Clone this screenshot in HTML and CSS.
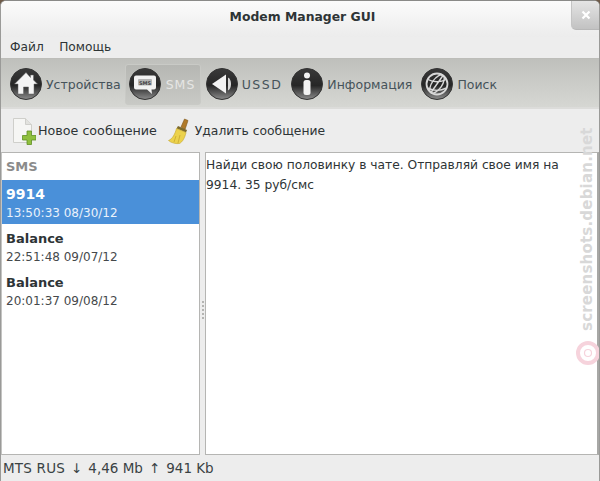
FILE: index.html
```html
<!DOCTYPE html>
<html lang="ru">
<head>
<meta charset="utf-8">
<title>Modem Manager GUI</title>
<link rel="stylesheet" href="styles.css">
</head>
<body>
<div class="window">
  <header class="titlebar">
    <span class="title">Modem Manager GUI</span>
    <button class="close"><svg width="10" height="10" viewBox="0 0 10 10"><path d="M1.5 1.5l7 7M8.5 1.500l-7 7" stroke="#fff" stroke-width="2.200"/></svg></button>
  </header>
  <nav class="menubar"><span>Файл</span><span>Помощь</span></nav>
  <div class="modes">
    <div class="mode">
      <svg class="orb" viewBox="0 0 32 32"><use href="#orbbg"/><path d="M16 4.500L4.500 16H8v10h5.500v-7h5v7H24V16h3.500L23.500 12V7h-3v2.500z" fill="#f4f4f4" stroke="#666" stroke-width=".5"/></svg>
      <span>Устройства</span>
    </div>
    <div class="mode active">
      <svg class="orb" viewBox="0 0 32 32"><use href="#orbbg"/><path d="M7 7.500h18a2 2 0 0 1 2 2v10a2 2 0 0 1-2 2h-2.500l.5 4.500-5-4.500H7a2 2 0 0 1-2-2v-10a2 2 0 0 1 2-2z" fill="#f2f2f2"/><rect x="9" y="11" width="14" height="6.500" rx="1" fill="#b4b4b4"/><text x="16" y="16.500" class="orbtext">SMS</text></svg>
      <span class="wide-sms">SMS</span>
    </div>
    <div class="mode">
      <svg class="orb" viewBox="0 0 32 32"><use href="#orbbg"/><path d="M6 16L20 6.500v19z" fill="#f2f2f2"/><path d="M22 9.500c2 1 3 3.500 3 6.500s-1 5.500-3 6.500z" fill="#d8d8d8"/></svg>
      <span class="wide-ussd">USSD</span>
    </div>
    <div class="mode">
      <svg class="orb" viewBox="0 0 32 32"><use href="#orbbg"/><circle cx="16" cy="7.500" r="3" fill="#f2f2f2"/><rect x="12.500" y="12" width="7" height="15" rx="2.500" fill="#f2f2f2"/></svg>
      <span>Информация</span>
    </div>
    <div class="mode">
      <svg class="orb" viewBox="0 0 32 32"><use href="#orbbg"/><g fill="none" stroke="#d8d8d8" stroke-width="1.400"><circle cx="16" cy="16" r="10.500" stroke-width="1.800"/><ellipse cx="16" cy="16" rx="5" ry="10.500" transform="rotate(35 16 16)"/><path d="M7 11.500c5 3 13 3 18 0M6.500 20c6 3 13 3 19 0M10 24.500L22 7.500"/></g></svg>
      <span>Поиск</span>
    </div>
  </div>
  <div class="actions">
    <div class="action">
      <svg class="act-icon" viewBox="0 0 24 28"><path d="M1.500 1.500h12l6 6v18h-18z" fill="#f6f6f4" stroke="#cfcfcb"/><path d="M13.500 1.500v6h6" fill="#e2e2de" stroke="#cfcfcb"/><path d="M15 14h4.500v4.500H24V23h-4.500v4.500H15V23h-4.500v-4.500H15z" fill="#8fbf3d" stroke="#5f8f24" stroke-width=".8"/></svg>
      <span>Новое сообщение</span>
    </div>
    <div class="action">
      <svg class="act-icon" viewBox="0 0 24 28"><path d="M14 10l3.500-8 3.500 1.500-3 9z" fill="#b07a2a" stroke="#7d5518" stroke-width=".6"/><path d="M11 9l9 4-1 2.500-9.500-4z" fill="#7c6a2e"/><path d="M9.500 11.500l9.500 4c-1 5-3.500 9.500-6.500 11-3 .5-8.500-.5-11-3 4-1.500 6.500-6.500 8-12z" fill="#ecd24c" stroke="#c4a62c" stroke-width=".6"/><path d="M9 19l-2 6M13 18l-2 8" stroke="#c8a830" stroke-width=".8" fill="none"/></svg>
      <span>Удалить сообщение</span>
    </div>
  </div>
  <main class="panes">
    <section class="list">
      <div class="list-head">SMS</div>
      <div class="item selected"><div class="who first">9914</div><div class="when">13:50:33 08/30/12</div></div>
      <div class="item"><div class="who">Balance</div><div class="when">22:51:48 09/07/12</div></div>
      <div class="item"><div class="who">Balance</div><div class="when">20:01:37 09/08/12</div></div>
    </section>
    <div class="grip"><i></i><i></i><i></i><i></i><i></i></div>
    <section class="message">Найди свою половинку в чате. Отправляй свое имя на 9914. 35 руб/смс</section>
  </main>
  <footer class="status"><span class="carrier">MTS RUS</span><span>↓</span><span>4,46 Mb</span><span>↑</span><span>941 Kb</span></footer>
  <div class="mark">screenshots.debian.net</div>
  <svg class="swirl" width="24" height="24" viewBox="0 0 24 24"><circle cx="12" cy="12" r="10" fill="none" stroke="#f6d3dc" stroke-width="4"/><circle cx="12" cy="12" r="3.500" fill="none" stroke="#f6d3dc" stroke-width="1.200"/></svg>
  <svg class="defs" width="0" height="0"><defs>
    <linearGradient id="og" x1="0" y1="0" x2="0" y2="1"><stop offset="0" stop-color="#3a3a3a"/><stop offset=".55" stop-color="#262626"/><stop offset="1" stop-color="#8c8c8c"/></linearGradient>
    <g id="orbbg"><circle cx="16" cy="16" r="15.500" fill="url(#og)" stroke="#333"/></g>
  </defs></svg>
</div>
</body>
</html>
```
FILE: styles.css
```css
* { box-sizing: border-box; }
html, body { margin: 0; padding: 0; background: #6e5a48; }
body { width: 600px; height: 481px; overflow: hidden; }
.window {
  position: relative;
  width: 600px;
  height: 481px;
  display: flex;
  flex-direction: column;
  background: #ededed;
  border-radius: 6px 6px 0 0;
  border-top: 1px solid #8a8a88;
  border-left: 1px solid #9a9a98;
  border-right: 1px solid #9a9a98;
  overflow: hidden;
  font-family: "DejaVu Sans", sans-serif;
  font-size: 12.5px;
  color: #2e3436;
}
.titlebar {
  height: 36px;
  flex: none;
  display: flex;
  align-items: center;
  justify-content: center;
  background: linear-gradient(#fbfbfb, #ececec);
}
.title { font-weight: bold; font-size: 12.4px; color: #2e3436; margin: -6px 0 0 5px; }
.close {
  position: absolute;
  top: 0; right: 0;
  width: 28px; height: 29px;
  padding: 0;
  border: 0;
  border-left: 1px solid #c4c4c4;
  border-bottom: 1px solid #b8b8b8;
  border-radius: 0 0 0 5px;
  background: linear-gradient(#e4e4e4, #c2c2c2);
  display: flex; align-items: center; justify-content: center;
}
.menubar {
  height: 22px;
  flex: none;
  display: flex;
  gap: 15.5px;
  align-items: center;
  padding: 0 0 2px 9px;
  background: #ededed;
  font-size: 12.2px;
  border-bottom: 1px solid #bdbdb9;
}
.modes {
  height: 50px;
  flex: none;
  display: flex;
  align-items: center;
  padding: 2px 0 0 9px;
  gap: 9px;
  background: linear-gradient(#bfc0bc, #d6d7d3);
  border-bottom: 2px solid #dcdcda;
  color: #46535a;
}
.mode { display: flex; align-items: center; gap: 4px; height: 41px; }
.mode.active {
  width: 76px;
  margin: 0 -4px 0 -5px;
  padding-left: 3px;
  gap: 5px;
  border: 1px solid #c9cac6;
  border-radius: 3px;
  background: linear-gradient(#b6b7b3, #c8c9c5);
  color: #e6e6e4;
}
.wide-sms { letter-spacing: 1px; }
.wide-ussd { letter-spacing: 1.5px; }
.orb { width: 32px; height: 32px; flex: none; }
.orbtext { font-family: "DejaVu Sans", sans-serif; font-size: 5px; font-weight: bold; fill: #444; text-anchor: middle; }
.actions {
  height: 43px;
  flex: none;
  display: flex;
  align-items: center;
  gap: 10px;
  padding: 0 0 0 11px;
  background: #ededed;
  font-size: 12.7px;
}
.action { display: flex; align-items: center; gap: 2px; }
.action + .action { gap: 4px; font-size: 12.35px; }
.act-icon { width: 24px; height: 28px; flex: none; }
.panes {
  flex: 1;
  display: flex;
  min-height: 0;
}
.list {
  width: 199px;
  flex: none;
  background: #fff;
  border: 1px solid #b5b5b3;
  border-left-color: #c4c4c2;
}
.list-head { height: 27px; padding: 6px 4px 0; font-weight: bold; color: #8b8b8b; font-size: 13px; background: #fff; }
.item { height: 44px; padding: 5px 4px 0; }
.item .who { font-weight: bold; line-height: 19px; font-size: 13px; }
.item .who.first { font-size: 14px; line-height: 19px; }
.item .when { font-size: 12px; line-height: 18px; color: #45494b; }
.item.selected { background: #4a90d9; color: #fff; }
.item.selected .when { color: #eaf2fb; }
.grip { width: 5px; flex: none; display: flex; flex-direction: column; justify-content: center; align-items: center; gap: 2px; margin-top: 12px; }
.grip i { width: 2px; height: 2px; background: #b4b4b2; }
.message {
  flex: 1;
  background: #fff;
  border: 1px solid #b5b5b3;
  border-right: 2px solid #a8a8a6;
  padding: 2px 30px 0 0;
  line-height: 20px;
  font-size: 12.25px;
}
.status {
  height: 26px;
  flex: none;
  display: flex;
  gap: 6px;
  align-items: center;
  padding-left: 2px;
  background: #ededed;
  color: #3a4244;
  font-size: 13.5px;
}
.carrier { letter-spacing: .2px; }
.mark {
  position: absolute;
  top: 127px;
  left: 577px;
  writing-mode: vertical-rl;
  transform: rotate(180deg);
  font-size: 15px;
  font-weight: bold;
  letter-spacing: .2px;
  color: #d8d8d8;
  height: 203px;
  white-space: nowrap;
}
.swirl { position: absolute; top: 340px; left: 575px; }
.defs { position: absolute; }
```
